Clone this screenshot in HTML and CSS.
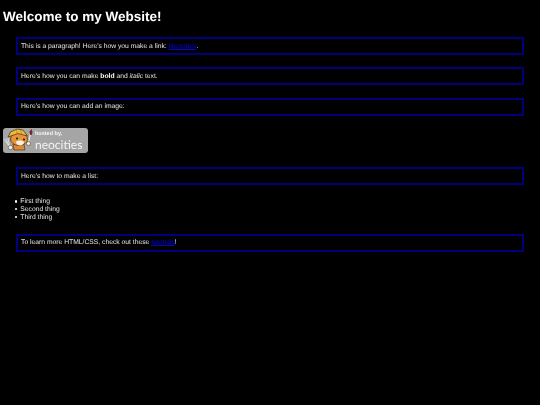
FILE: index.html
```html
<!DOCTYPE html>
<html lang="en">

<head>
  <meta charset="UTF-8" />
  <meta name="viewport" content="width=device-width, initial-scale=1.0" />
  <title>Welcome to my Website!</title>
  <link rel="stylesheet" href="styles.css">
</head>

<body>
  <h1>Welcome to my Website!</h1>

  <p class="box">This is a paragraph! Here's how you make a link: <a href="#">Neocities</a>.</p>
  <p class="box">Here's how you can make <strong>bold</strong> and <em>italic</em> text.</p>
  <p class="box">Here's how you can add an image:</p>

  <div class="badge">
    <svg class="cat" viewBox="0 0 32 25" width="32" height="25">
      <!-- fork -->
      <path d="M1 11l5 7M3 10.500l3 7.500M5 10l1.500 8" stroke="#e6e6e6" stroke-width="0.8" fill="none" />
      <!-- body and paws -->
      <path d="M10 16h11l1 6H11z" fill="#e08a35" stroke="#3a2a12" stroke-width="0.6" />
      <circle cx="7.500" cy="19.500" r="2.200" fill="#f6f0e0" stroke="#3a2a12" stroke-width="0.5" />
      <!-- head -->
      <ellipse cx="16" cy="11" rx="8.500" ry="6.500" fill="#e8923a" stroke="#3a2a12" stroke-width="0.7" />
      <path d="M13 14c1-2 7-2 8 0 0 2-2 3.500-4 3.500s-4-1.500-4-3.500z" fill="#f8f0de" />
      <circle cx="14" cy="10.500" r="1" fill="#1c1408" />
      <circle cx="21" cy="11.500" r="1" fill="#1c1408" />
      <!-- hat -->
      <path d="M5 9l2.500-5L14 1l6 1 4.500 6-9.500-2.500z" fill="#ecbd3c" stroke="#3a2a12" stroke-width="0.7" />
      <path d="M13 1.500l1.500 4M17.500 2l1.500 4.500" stroke="#b9801e" stroke-width="0.7" />
      <!-- paintbrush -->
      <path d="M25.500 15l1.800-9" stroke="#f0e6d0" stroke-width="1.200" />
      <path d="M27.200 7l-0.700-3.500L28.500 1l1 3-0.800 3z" fill="#7a2530" />
      <circle cx="25.500" cy="15.500" r="2" fill="#f6f0e0" stroke="#3a2a12" stroke-width="0.5" />
    </svg>
    <div class="badge-text">
      <span class="hosted">hosted by,</span>
      <span class="name">neocities</span>
    </div>
  </div>

  <p class="box">Here's how to make a list:</p>

  <ul>
    <li>First thing</li>
    <li>Second thing</li>
    <li>Third thing</li>
  </ul>

  <p class="box">To learn more HTML/CSS, check out these <a href="#">tutorials</a>!</p>
</body>

</html>
```

FILE: styles.css
```css
html {
  background-color: #000;
}

body {
  margin: 3px;
  font-family: "Liberation Sans", Arial, sans-serif;
  font-size: 6.75px;
  line-height: 7.6px;
  color: #e4e4e4;
  background-color: #000;
  text-rendering: geometricPrecision;
  filter: blur(0.35px);
}

h1 {
  font-size: 13.5px;
  line-height: 15.5px;
  margin: 5.9px 0 12.6px;
  color: #fff;
}

strong {
  color: #fff;
}

a {
  color: #00e;
}

.box {
  border: 2px solid #00007e;
  padding: 3.6px 3px 2.4px;
  line-height: 8px;
  margin: 12.4px 13px;
}

.badge {
  display: flex;
  width: 85px;
  height: 25px;
  margin: 0 0 14px;
  border-radius: 3px;
  background-color: #a5a5a5;
}

.cat {
  flex: none;
}

.badge-text {
  display: flex;
  flex-direction: column;
  padding-top: 3px;
  color: #f4f4f4;
}

.hosted {
  font-size: 5.5px;
  line-height: 6px;
  font-weight: bold;
}

.name {
  font-family: Lato, sans-serif;
  font-size: 12px;
  line-height: 13px;
  margin-top: 1px;
}

ul {
  margin: 13.3px 0 12.1px;
  padding-left: 17.300px;
  list-style: none;
}

li::before {
  content: "";
  display: inline-block;
  width: 2.2px;
  height: 2.2px;
  margin: 0 3.5px 0.8px -5.7px;
  border-radius: 50%;
  background-color: #fff;
}
```
